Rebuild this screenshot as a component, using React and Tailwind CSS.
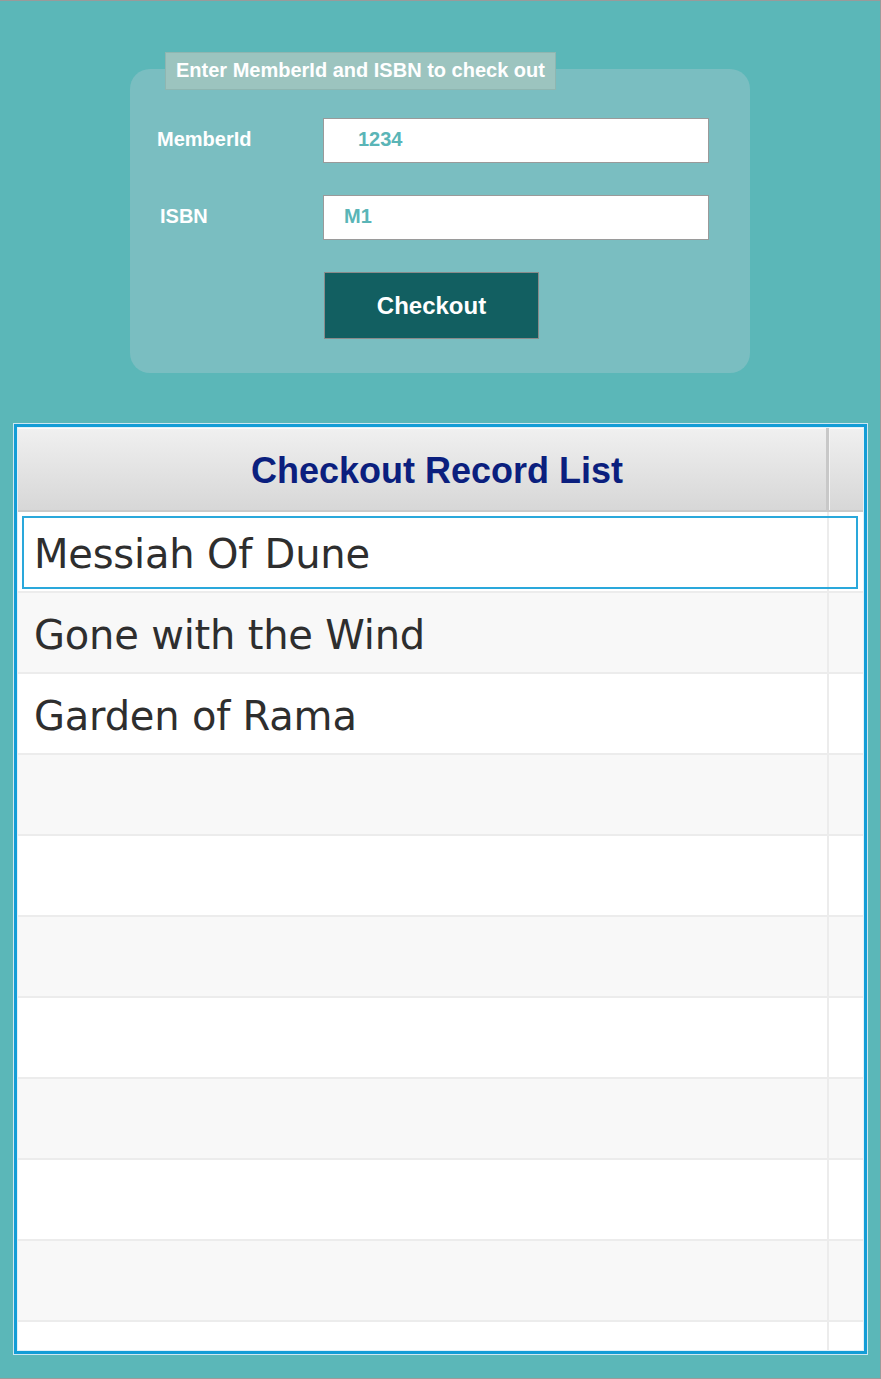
import React from "react";

const records = ["Messiah Of Dune", "Gone with the Wind", "Garden of Rama"];

export default function App() {
  const rows = Array.from({ length: 11 }, (_, i) => records[i] || "");

  return (
    <div className="h-[1379px] w-[881px] overflow-hidden border-t border-r border-b border-[#9a9a9a] bg-[#5bb7b8] pt-[51px] font-['Liberation_Sans',Arial,sans-serif]">
      {/* Checkout form */}
      <div className="relative z-10 ml-[165px] h-[38px] w-[391px] border border-[#8fb6b1] bg-[#9cc4bf] pl-[10px] text-[20px] font-bold leading-[34px] text-white">
        Enter MemberId and ISBN to check out
      </div>
      <div className="-mt-[21px] ml-[130px] w-[620px] rounded-[20px] bg-[#7abec1] pt-[49px] pb-[34px] pl-[27px]">
        <div className="flex h-[45px] items-center">
          <label className="w-[166px] pb-[3px] text-[20px] font-bold text-white">
            MemberId
          </label>
          <input
            defaultValue="1234"
            className="h-[45px] w-[386px] border border-[#9a9a9a] bg-white pb-[2px] pl-[34px] text-[20px] font-bold text-[#5ab5b7] outline-none"
          />
        </div>
        <div className="mt-[32px] flex h-[45px] items-center">
          <label className="w-[166px] pb-[3px] pl-[3px] text-[20px] font-bold text-white">
            ISBN
          </label>
          <input
            defaultValue="M1"
            className="h-[45px] w-[386px] border border-[#9a9a9a] bg-white pb-[2px] pl-[20px] text-[20px] font-bold text-[#5ab5b7] outline-none"
          />
        </div>
        <button className="mt-[32px] ml-[167px] h-[67px] w-[215px] border border-[#8a8a8a] bg-[#125f61] text-[24px] font-bold text-white">
          Checkout
        </button>
      </div>

      {/* Record list */}
      <div className="mt-[50px] ml-[13px] w-[855px] border border-[#cde7f1]">
        <div className="border-[3px] border-[#139dd6]">
          <div className="h-[924px] overflow-hidden border border-[#e2f1f8] bg-white">
            <div className="flex h-[84px] border-b-2 border-[#c9c9c9] bg-linear-to-b from-[#f0f0f0] to-[#d7d7d7] shadow-[inset_0_1px_0_#fafafa]">
              <div className="flex flex-1 items-center justify-center border-r-[3px] border-[#c8c8c8] pt-[3px] pl-[30px] text-[36px] font-bold text-[#0b1f7e]">
                Checkout Record List
              </div>
              <div className="w-[34px] shadow-[inset_1px_0_0_#f4f4f4]" />
            </div>
            {rows.map((title, i) => (
              <div
                key={i}
                className={`relative flex h-[81px] border-b-2 border-[#ececec] ${
                  i % 2 === 0 ? "bg-white" : "bg-[#f8f8f8]"
                }`}
              >
                <div className="flex flex-1 items-center border-r-2 border-[#ececec] pt-[4px] pl-[16px] font-['DejaVu_Sans',sans-serif] text-[40px] tracking-[-0.2px] text-[#2e2e2e]">
                  {title}
                </div>
                <div className="w-[34px]" />
                {i === 0 && (
                  <div className="absolute top-[4px] right-[5px] bottom-[2px] left-[4px] border-2 border-[#2aa8db]" />
                )}
              </div>
            ))}
          </div>
        </div>
      </div>
    </div>
  );
}
